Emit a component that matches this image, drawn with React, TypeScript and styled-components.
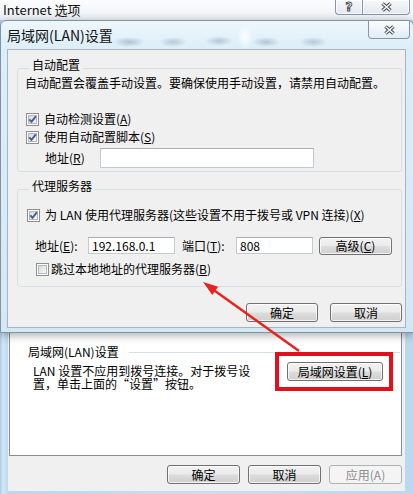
import React, { FC } from 'react';
import styled, { createGlobalStyle } from 'styled-components';

const GlobalStyle = createGlobalStyle`
  html, body {
    margin: 0;
    padding: 0;
    background: #ffffff;
  }
  body {
    font-family: "Noto Sans CJK SC", "Noto Sans", sans-serif;
    font-size: 12px;
    color: #000;
  }
`;

const Screen = styled.div`
  position: relative;
  width: 413px;
  height: 494px;
  overflow: hidden;
`;

/* ---------- outer "Internet 选项" window ---------- */

const OuterWindow = styled.div`
  width: 413px;
  height: 494px;
  box-sizing: border-box;
  display: flex;
  flex-direction: column;
  background: linear-gradient(90deg, #a9cbe6 0, #d4e7f5 3px, #bcd8ee 8px, #c6def1 50%, #bcd8ee 100%);
`;

const OuterTitleBar = styled.div`
  height: 20px;
  flex-shrink: 0;
  display: flex;
  align-items: center;
  padding-left: 3px;
  background: linear-gradient(#fbfcfd, #eef2f6);
`;

const OuterTitle = styled.span`
  font-size: 13px;
  line-height: 14px;
  color: #111;
`;

const CaptionButtons = styled.div`
  margin-left: auto;
  margin-right: 3px;
  align-self: flex-start;
  display: flex;
`;

const CaptionButton = styled.div<{ $w: number; $first?: boolean; $last?: boolean }>`
  width: ${({ $w }) => $w}px;
  height: 15px;
  box-sizing: border-box;
  display: flex;
  align-items: center;
  justify-content: center;
  border: 1px solid #8895a6;
  border-top: none;
  border-left-width: ${({ $first }) => ($first ? 1 : 0)}px;
  border-radius: ${({ $first, $last }) => `0 0 ${$last ? 4 : 0}px ${$first ? 4 : 0}px`};
  background: linear-gradient(#f6f8fa, #e4e9ef);
  box-shadow: inset 0 0 0 1px rgba(255, 255, 255, 0.7);
`;

const HelpGlyph = styled.span`
  font-family: "DejaVu Sans", sans-serif;
  font-weight: bold;
  font-size: 12px;
  line-height: 12px;
  color: #ffffff;
  -webkit-text-stroke: 1px #4a505a;
`;

const OuterClient = styled.div`
  flex: 1;
  display: flex;
  flex-direction: column;
  margin: 0 8px 3px 8px;
  padding: 20px 3px 7px 1px;
  background: #f0f0f0;
`;

const TabPanel = styled.div`
  flex: 1;
  display: flex;
  flex-direction: column;
  justify-content: flex-end;
  background: #ffffff;
  border: 1px solid #898c95;
  padding: 0 0 65px 18px;
`;

const LanHeader = styled.div`
  display: flex;
  align-items: center;
  height: 12px;
  line-height: 12px;
  white-space: nowrap;
`;

const HeaderRule = styled.div`
  flex: 1;
  height: 1px;
  margin: 0 1px 0 10px;
  background: #d5dfe5;
`;

const LanBody = styled.div`
  display: flex;
  justify-content: space-between;
  align-items: flex-start;
  padding: 0 18px 0 5px;
`;

const LanText = styled.div`
  margin-top: 6px;
  line-height: 13px;
  white-space: nowrap;
`;

const Highlight = styled.div`
  position: relative;
  margin-top: 4px;
`;

const RedMark = styled.div`
  position: absolute;
  top: -10px;
  bottom: -10px;
  left: -12px;
  right: -10px;
  border: 4px solid #e3101b;
  pointer-events: none;
`;

const ButtonRow = styled.div<{ $gap: number; $top: number }>`
  display: flex;
  justify-content: flex-end;
  gap: ${({ $gap }) => $gap}px;
  margin-top: ${({ $top }) => $top}px;
`;

const Button = styled.button<{ $w: number; $h?: number }>`
  width: ${({ $w }) => $w}px;
  height: ${({ $h }) => $h ?? 19}px;
  box-sizing: border-box;
  margin: 0;
  padding: 0;
  font-family: inherit;
  font-size: 12px;
  line-height: 12px;
  color: #000;
  border: 1px solid #707070;
  border-radius: 3px;
  background: linear-gradient(#f2f2f2 0%, #ebebeb 48%, #dddddd 52%, #cfcfcf 100%);
  box-shadow: inset 0 0 0 1px rgba(255, 255, 255, 0.75);
  white-space: nowrap;

  &:disabled {
    color: #8d8d8d;
    border-color: #adb2b5;
    background: #f4f4f4;
    box-shadow: none;
  }
`;

/* ---------- LAN settings dialog ---------- */

const Dialog = styled.div`
  position: absolute;
  top: 20px;
  left: 0;
  width: 414px;
  height: 313px;
  box-sizing: border-box;
  display: flex;
  flex-direction: column;
  border: 1px solid #7d93aa;
  border-radius: 6px 6px 0 0;
  background: linear-gradient(#eef7fc 0, #dceef8 28px, #d4e8f4 100%);
  box-shadow: 0 2px 10px rgba(0, 0, 0, 0.35);
`;

const DialogTitleBar = styled.div`
  height: 28px;
  flex-shrink: 0;
  display: flex;
  align-items: center;
  padding-left: 6px;
  background:
    radial-gradient(ellipse 16px 5px at 128px 21px, rgba(70, 100, 130, 0.32), transparent),
    radial-gradient(ellipse 14px 5px at 172px 21px, rgba(70, 100, 130, 0.28), transparent),
    radial-gradient(ellipse 14px 5px at 218px 20px, rgba(70, 100, 130, 0.3), transparent),
    radial-gradient(ellipse 8px 12px at 244px 16px, rgba(255, 255, 255, 0.9), transparent),
    radial-gradient(ellipse 14px 5px at 265px 21px, rgba(70, 100, 130, 0.3), transparent),
    radial-gradient(ellipse 14px 5px at 312px 21px, rgba(70, 100, 130, 0.28), transparent);
`;

const DialogTitle = styled.span`
  font-size: 14px;
  line-height: 16px;
  color: #111;
`;

const CloseButton = styled.div`
  margin-left: auto;
  margin-right: 3px;
  align-self: flex-start;
  width: 42px;
  height: 18px;
  box-sizing: border-box;
  display: flex;
  align-items: center;
  justify-content: center;
  border: 1px solid #8795a7;
  border-top: none;
  border-radius: 0 0 4px 4px;
  background: linear-gradient(rgba(255, 255, 255, 0.7), rgba(225, 234, 242, 0.7));
`;

const DialogClient = styled.div`
  flex: 1;
  margin: 0 7px 4px 6px;
  padding: 9px 3px 0 9px;
  background: #f0f0f0;
  border: 1px solid #a7b4c3;
`;

const GroupBox = styled.fieldset<{ $top?: number; $bottom: number }>`
  margin: ${({ $top }) => $top ?? 0}px 0 0 0;
  padding: 0 6px ${({ $bottom }) => $bottom}px 7px;
  min-inline-size: 0;
  border: 1px solid #d5dfe5;
  border-radius: 3px;
`;

const GroupLegend = styled.legend`
  margin-left: 4px;
  padding: 0 3px 6px 3px;
  line-height: 12px;
`;

const Text = styled.div`
  line-height: 12px;
  white-space: nowrap;
`;

const Row = styled.div<{ $top?: number; $indent?: number; $h?: number; $gap?: number }>`
  display: flex;
  align-items: center;
  height: ${({ $h }) => $h ?? 18}px;
  margin-top: ${({ $top }) => $top ?? 0}px;
  padding-left: ${({ $indent }) => $indent ?? 0}px;
  gap: ${({ $gap }) => $gap ?? 5}px;
  line-height: 12px;
  white-space: nowrap;
`;

const FieldLabel = styled.span<{ $w: number }>`
  width: ${({ $w }) => $w}px;
  flex-shrink: 0;
`;

const TextField = styled.input<{ $w: number; $h: number }>`
  width: ${({ $w }) => $w}px;
  height: ${({ $h }) => $h}px;
  box-sizing: border-box;
  margin: 0;
  padding: 0 3px;
  font-family: inherit;
  font-size: 12px;
  color: #000;
  background: #ffffff;
  border: 1px solid #c5cad1;
  border-top-color: #abadb3;
  outline: none;
`;

const CheckFrame = styled.span`
  position: relative;
  width: 13px;
  height: 13px;
  flex-shrink: 0;
  box-sizing: border-box;
  border: 1px solid #8e8f8f;
  background: #ffffff;
  padding: 1px;
`;

const CheckInner = styled.span`
  display: block;
  width: 9px;
  height: 9px;
  box-sizing: border-box;
  border: 1px solid #b3b8bd;
  background: linear-gradient(135deg, #d6d9dd, #f8f8f8);
`;

const CheckMark = styled.svg`
  position: absolute;
  left: 0;
  top: 0;
`;

const Key = styled.u`
  text-decoration-thickness: 1px;
  text-underline-offset: 1px;
`;

const Check: FC<{ checked?: boolean }> = ({ checked }) => (
  <CheckFrame>
    <CheckInner />
    {checked ? (
      <CheckMark width="11" height="11" viewBox="0 0 11 11">
        <path d="M2.3 5.4 L4.5 7.8 L8.8 2.4" stroke="#4159a0" strokeWidth="1.9" fill="none" />
      </CheckMark>
    ) : null}
  </CheckFrame>
);

const XGlyph: FC = () => (
  <svg width="13" height="10" viewBox="0 0 13 10">
    <path d="M2.5 1.5 L10.5 8.5 M10.5 1.5 L2.5 8.5" stroke="#434a55" strokeWidth="3.6" fill="none" />
    <path d="M2.5 1.5 L10.5 8.5 M10.5 1.5 L2.5 8.5" stroke="#f7f7f7" strokeWidth="1.6" fill="none" />
  </svg>
);

const Arrow = styled.svg`
  position: absolute;
  top: 0;
  left: 0;
  pointer-events: none;
`;

const App: FC = () => (
  <>
    <GlobalStyle />
    <Screen>
      <OuterWindow>
        <OuterTitleBar>
          <OuterTitle>Internet 选项</OuterTitle>
          <CaptionButtons>
            <CaptionButton $w={28} $first>
              <HelpGlyph>?</HelpGlyph>
            </CaptionButton>
            <CaptionButton $w={47} $last>
              <XGlyph />
            </CaptionButton>
          </CaptionButtons>
        </OuterTitleBar>
        <OuterClient>
          <TabPanel>
            <LanHeader>
              局域网(LAN)设置
              <HeaderRule />
            </LanHeader>
            <LanBody>
              <LanText>
                LAN 设置不应用到拨号连接。对于拨号设
                <br />
                置，单击上面的“设置”按钮。
              </LanText>
              <Highlight>
                <Button $w={96}>
                  局域网设置(<Key>L</Key>)
                </Button>
                <RedMark />
              </Highlight>
            </LanBody>
          </TabPanel>
          <ButtonRow $gap={8} $top={9}>
            <Button $w={73}>确定</Button>
            <Button $w={73}>取消</Button>
            <Button $w={73} disabled>
              应用(A)
            </Button>
          </ButtonRow>
        </OuterClient>
      </OuterWindow>

      <Dialog>
        <DialogTitleBar>
          <DialogTitle>局域网(LAN)设置</DialogTitle>
          <CloseButton>
            <XGlyph />
          </CloseButton>
        </DialogTitleBar>
        <DialogClient>
          <GroupBox $bottom={3}>
            <GroupLegend>自动配置</GroupLegend>
            <Text>自动配置会覆盖手动设置。要确保使用手动设置，请禁用自动配置。</Text>
            <Row $top={21} $indent={1}>
              <Check checked />
              <span>
                自动检测设置(<Key>A</Key>)
              </span>
            </Row>
            <Row $indent={1}>
              <Check checked />
              <span>
                使用自动配置脚本(<Key>S</Key>)
              </span>
            </Row>
            <Row $top={2} $indent={20} $h={20} $gap={13}>
              <FieldLabel $w={42}>
                地址(<Key>R</Key>)
              </FieldLabel>
              <TextField $w={214} $h={20} readOnly value="" />
            </Row>
          </GroupBox>

          <GroupBox $top={8} $bottom={8}>
            <GroupLegend>代理服务器</GroupLegend>
            <Row $top={8} $indent={2}>
              <Check checked />
              <span>
                为 LAN 使用代理服务器(这些设置不用于拨号或 VPN 连接)(<Key>X</Key>)
              </span>
            </Row>
            <Row $top={12} $indent={10} $h={19} $gap={0}>
              <FieldLabel $w={53}>
                地址(<Key>E</Key>):
              </FieldLabel>
              <TextField $w={87} $h={17} readOnly value="192.168.0.1" />
              <FieldLabel $w={54} style={{ paddingLeft: 7 }}>
                端口(<Key>T</Key>):
              </FieldLabel>
              <TextField $w={77} $h={17} readOnly value="808" />
              <Button $w={73} $h={18} style={{ marginLeft: 6 }}>
                高级(<Key>C</Key>)
              </Button>
            </Row>
            <Row $top={5} $indent={11} $gap={2}>
              <Check />
              <span>
                跳过本地地址的代理服务器(<Key>B</Key>)
              </span>
            </Row>
          </GroupBox>

          <ButtonRow $gap={12} $top={16}>
            <Button $w={72}>确定</Button>
            <Button $w={72}>取消</Button>
          </ButtonRow>
        </DialogClient>
      </Dialog>

      <Arrow width="413" height="494" viewBox="0 0 413 494">
        <line x1="299" y1="351" x2="213" y2="289.5" stroke="#e8231d" strokeWidth="2.4" />
        <polygon points="203,282 212.3,294.9 218.1,286.7" fill="#e8231d" />
      </Arrow>
    </Screen>
  </>
);

export default App;
